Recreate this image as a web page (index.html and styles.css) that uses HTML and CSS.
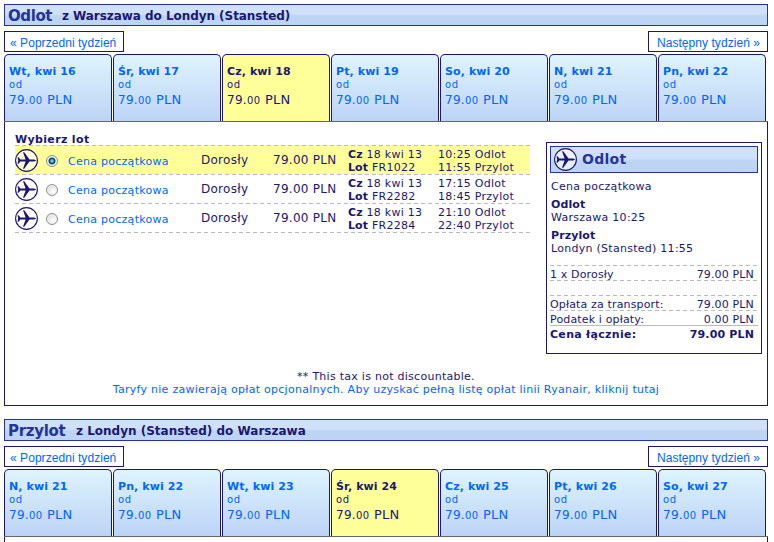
FILE: index.html
```html
<!DOCTYPE html>
<html lang="pl">
<head>
<meta charset="utf-8">
<title>Wybierz lot</title>
<link rel="stylesheet" href="styles.css">
</head>
<body>
<svg class="defs" width="0" height="0">
  <symbol id="plane" viewBox="0 0 24 24">
    <circle cx="11.5" cy="11.5" r="10.9" fill="#fff" fill-opacity=".6" stroke="#1b1772" stroke-width="1.1"/>
    <path fill="#1b1772" d="M21.5 11.5 19 10.4H14.5L9.3 3.2H8L10.6 10.4H5.4L3.6 8.2H2.5L3.2 11.5 2.5 14.8H3.6L5.4 12.6H10.6L8 19.8H9.3L14.5 12.6H19Z"/>
  </symbol>
</svg>
<main>
  <section class="leg">
    <h2 class="bar"><span class="dir">Odlot</span><span class="route r1">z Warszawa do Londyn (Stansted)</span></h2>
    <nav class="weeks"><a class="prev">« Poprzedni tydzień</a><a class="next">Następny tydzień »</a></nav>
    <div class="tabs">
      <div class="tab"><b>Wt, kwi 16</b><small>od</small><p>79.<i>00</i> <span>PLN</span></p></div>
      <div class="tab"><b>Śr, kwi 17</b><small>od</small><p>79.<i>00</i> <span>PLN</span></p></div>
      <div class="tab on"><b>Cz, kwi 18</b><small>od</small><p>79.<i>00</i> <span>PLN</span></p></div>
      <div class="tab"><b>Pt, kwi 19</b><small>od</small><p>79.<i>00</i> <span>PLN</span></p></div>
      <div class="tab"><b>So, kwi 20</b><small>od</small><p>79.<i>00</i> <span>PLN</span></p></div>
      <div class="tab"><b>N, kwi 21</b><small>od</small><p>79.<i>00</i> <span>PLN</span></p></div>
      <div class="tab"><b>Pn, kwi 22</b><small>od</small><p>79.<i>00</i> <span>PLN</span></p></div>
    </div>
    <div class="panel">
      <div class="cols">
        <div class="flights">
          <h3>Wybierz lot</h3>
          <div class="flight on"><svg class="plane"><use href="#plane"/></svg><span class="radio"></span><a>Cena początkowa</a><span class="who">Dorosły</span><span class="cost">79.00 PLN</span><span class="num"><b>Cz</b> 18 kwi 13<br><b>Lot</b> FR1022</span><span class="time">10:25 Odlot<br>11:55 Przylot</span></div>
          <div class="flight"><svg class="plane"><use href="#plane"/></svg><span class="radio"></span><a>Cena początkowa</a><span class="who">Dorosły</span><span class="cost">79.00 PLN</span><span class="num"><b>Cz</b> 18 kwi 13<br><b>Lot</b> FR2282</span><span class="time">17:15 Odlot<br>18:45 Przylot</span></div>
          <div class="flight"><svg class="plane"><use href="#plane"/></svg><span class="radio"></span><a>Cena początkowa</a><span class="who">Dorosły</span><span class="cost">79.00 PLN</span><span class="num"><b>Cz</b> 18 kwi 13<br><b>Lot</b> FR2284</span><span class="time">21:10 Odlot<br>22:40 Przylot</span></div>
        </div>
        <aside class="summary">
          <h4><svg class="plane"><use href="#plane"/></svg><span>Odlot</span></h4>
          <p class="fare">Cena początkowa</p>
          <p class="stop"><b>Odlot</b><br>Warszawa 10:25</p>
          <p class="stop"><b>Przylot</b><br>Londyn (Stansted) 11:55</p>
          <div class="line first"><span>1 x Dorosły</span><span>79.00 PLN</span></div>
          <div class="line blank"></div>
          <div class="line"><span>Opłata za transport:</span><span>79.00 PLN</span></div>
          <div class="line tax"><span>Podatek i opłaty:</span><span>0.00 PLN</span></div>
          <div class="line total"><span>Cena łącznie:</span><span>79.00 PLN</span></div>
        </aside>
      </div>
      <div class="note"><p>** This tax is not discountable.</p><p><a>Taryfy nie zawierają opłat opcjonalnych. Aby uzyskać pełną listę opłat linii Ryanair, kliknij tutaj</a></p></div>
    </div>
  </section>
  <section class="leg">
    <h2 class="bar"><span class="dir d2">Przylot</span><span class="route r2">z Londyn (Stansted) do Warszawa</span></h2>
    <nav class="weeks"><a class="prev">« Poprzedni tydzień</a><a class="next">Następny tydzień »</a></nav>
    <div class="tabs">
      <div class="tab"><b>N, kwi 21</b><small>od</small><p>79.<i>00</i> <span>PLN</span></p></div>
      <div class="tab"><b>Pn, kwi 22</b><small>od</small><p>79.<i>00</i> <span>PLN</span></p></div>
      <div class="tab"><b>Wt, kwi 23</b><small>od</small><p>79.<i>00</i> <span>PLN</span></p></div>
      <div class="tab on"><b>Śr, kwi 24</b><small>od</small><p>79.<i>00</i> <span>PLN</span></p></div>
      <div class="tab"><b>Cz, kwi 25</b><small>od</small><p>79.<i>00</i> <span>PLN</span></p></div>
      <div class="tab"><b>Pt, kwi 26</b><small>od</small><p>79.<i>00</i> <span>PLN</span></p></div>
      <div class="tab"><b>So, kwi 27</b><small>od</small><p>79.<i>00</i> <span>PLN</span></p></div>
    </div>
    <div class="panel closed"></div>
  </section>
</main>
</body>
</html>
```
FILE: styles.css
```css
* { box-sizing: border-box; margin: 0; padding: 0; }
body { background: #fff; color: #1b1772; font: 11px/13px Verdana, "DejaVu Sans", sans-serif; letter-spacing: .27px; white-space: nowrap; }
b { letter-spacing: .1px; }
.defs { display: block; }
main { width: 764px; padding-top: 4px; margin-left: 4px; }
a { color: #06f; }
.leg + .leg { margin-top: 13px; }
.bar { display: flex; height: 22px; border: 1px solid #24349a; padding-left: 3px; background: linear-gradient(#cfe0f9 0, #cfe0f9 45%, #bed4f5 55%, #bed4f5 100%); line-height: 22px; letter-spacing: 0; }
.dir { width: 54px; font-size: 15px; color: #24349a; letter-spacing: -.4px; }
.r1 { letter-spacing: -.05px; }
.d2 { width: 68px; letter-spacing: -.3px; }
.route { font-size: 12px; line-height: 23px; }
.weeks { display: flex; justify-content: space-between; margin: 5px 0 2px; font: 12px/22px "Liberation Sans", Arial, sans-serif; letter-spacing: .05px; }
.weeks a { width: 120px; height: 21px; border: 1px solid #1b1772; padding-left: 5px; }
.weeks .next { padding-left: 8px; }
.tabs { display: flex; gap: 1px; height: 68px; border-bottom: 1px solid #666; }
.tab { width: 108px; height: 67px; border: 1px solid #1b1772; border-bottom: 0; border-radius: 5px 5px 0 0; padding: 10px 0 0 4px; background: linear-gradient(#def4fe, #bdd3f5); color: #06f; }
.tab.on { background: #ff9; color: #1b1772; }
.tab b, .tab small { display: block; }
.tab small { font-size: 10px; letter-spacing: .6px; }
.tab p { font-size: 12px; line-height: 19px; }
.tab i { font-style: normal; font-size: 10px; letter-spacing: .6px; }
.tab p span { font-size: 13px; line-height: 13px; }
.panel { height: 284px; border: 1px solid #1b1772; border-top: 0; }
.panel.closed { height: 5px; border-bottom: 0; }
.cols { display: flex; height: 248px; }
.flights { width: 515px; margin: 11px 16px 0 10px; }
.flights h3 { font-size: 11px; line-height: 13px; height: 12px; letter-spacing: .35px; }
.flight { display: flex; align-items: center; height: 29px; padding-top: 2px; background: repeating-linear-gradient(90deg, #bbb 0 4px, transparent 4px 7px) top / 100% 1px no-repeat; }
.flight:last-child { height: 30px; padding-bottom: 1px; background: repeating-linear-gradient(90deg, #bbb 0 4px, transparent 4px 7px) top / 100% 1px no-repeat, repeating-linear-gradient(90deg, #bbb 0 4px, transparent 4px 7px) bottom / 100% 1px no-repeat; }
.flight.on { background-color: #ff9; }
.plane { width: 24px; height: 24px; flex: none; }
.radio { width: 12px; height: 12px; margin: 0 10px 0 7px; border: 1px solid #8e8f8f; border-radius: 50%; background: radial-gradient(circle at 65% 65%, #fff, #d2d4d6); box-shadow: inset 0 0 0 1px #f4f4f4; }
.on .radio { background: radial-gradient(circle, #5cc8f0 0 1px, #14486c 2.5px 3px, #e9eef0 4px); }
.flight a { width: 133px; padding-top: 2px; }
.who { width: 72px; font-size: 12px; }
.cost { width: 75px; font-size: 12px; }
.num { width: 90px; }
.summary { width: 216px; height: 212px; margin-top: 20px; border: 1px solid #1b1772; padding: 3px; }
.summary h4 { display: flex; align-items: center; height: 27px; width: 208px; border: 1px solid #24349a; padding-left: 3px; font-size: 14px; color: #24349a; background: linear-gradient(#cfe0f9 0, #cfe0f9 45%, #bed4f5 55%, #bed4f5 100%); }
.summary h4 span { margin-left: 4px; }
.fare { margin: 7px 0 5px 1px; }
.stop { margin: 0 0 5px 1px; }
.line { display: flex; justify-content: space-between; height: 15px; width: 208px; padding: 3px 4px 0 0; letter-spacing: .15px; background: repeating-linear-gradient(90deg, #bbb 0 4px, transparent 4px 7px) top / 100% 1px no-repeat; }
.line.first { margin-top: 10px; }
.line.total { font-weight: bold; background: linear-gradient(#bbb, #bbb) top / 100% 1px no-repeat; }
.line.total span:first-child { letter-spacing: .3px; }
.note { text-align: center; }
```
